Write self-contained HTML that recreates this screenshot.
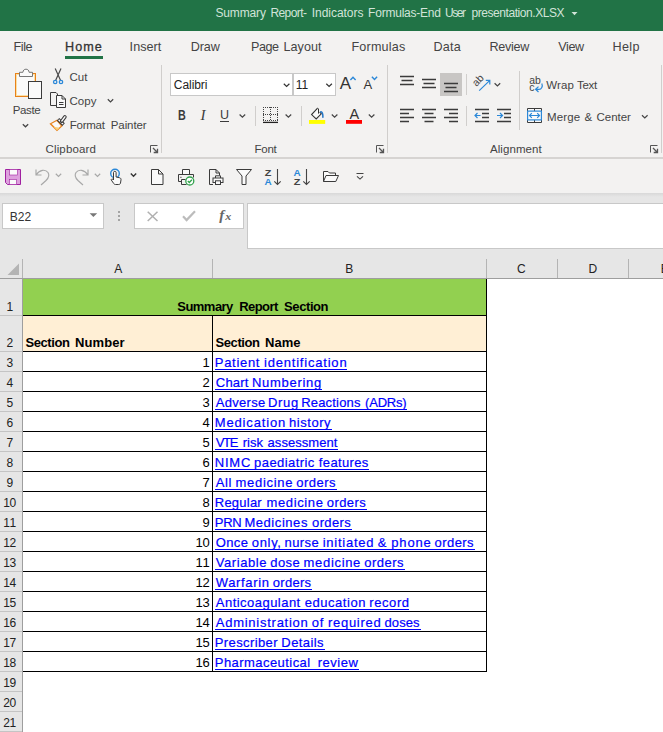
<!DOCTYPE html><html lang="en"><head><meta charset="utf-8"><title>Summary Report - Excel</title><style>

html,body{margin:0;padding:0}
body{width:663px;height:732px;position:relative;overflow:hidden;background:#fff;font-family:"Liberation Sans",sans-serif;color:#444}
div,span,svg{position:absolute;box-sizing:border-box}
.t{white-space:pre;line-height:1;}
.titlebar{left:0;top:0;width:663px;height:31px;background:#217346}
.ribbon{left:0;top:31px;width:663px;height:126px;background:#f3f2f1}
.ribbon-edge{left:0;top:157px;width:663px;height:2px;background:#d6d4d2}
.qat{left:0;top:159px;width:663px;height:34px;background:#f3f2f1}
.qat-shadow{left:0;top:193px;width:663px;height:4px;background:linear-gradient(#d8d8d8,#e6e6e6)}
.fbar{left:0;top:197px;width:663px;height:62px;background:#e6e6e6}
.box{background:#fff;border:1px solid #c8c8c8}
.colhdr{left:0;top:259px;width:663px;height:20px;background:#e6e6e6;border-bottom:1px solid #9e9e9e}
.rowhdr{left:0;top:279px;width:23px;height:453px;background:#e6e6e6;border-right:1px solid #9e9e9e}
.rsep{left:0;width:22px;height:1px;background:#c4c4c4}
.csep{top:259px;width:1px;height:19px;background:#b4b4b4}
.vsep{width:1px;background:#d0cecc}
.hl{background:#c8c6c4}
.home-ul{left:65px;top:56px;width:38px;height:3px;background:#217346}
.c1{left:23px;top:279px;width:464px;height:36px;background:#92d050}
.c2{left:23px;top:316px;width:464px;height:35px;background:#ffefd5}
.ln{background:#000}
svg{left:0;top:0;overflow:visible}
.lk{-webkit-text-stroke:0.2px #00f}
.ul{height:1px;background:#00f}

</style></head><body>

<div class="titlebar"></div><div class="ribbon"></div><div class="ribbon-edge"></div><div class="qat"></div><div class="qat-shadow"></div><div class="fbar"></div>
<div class="home-ul"></div>
<div class="vsep" style="left:161px;top:65px;height:88px"></div>
<div class="vsep" style="left:387px;top:65px;height:88px"></div>
<div class="vsep" style="left:661px;top:65px;height:88px"></div>
<div class="vsep" style="left:519px;top:71px;height:59px"></div>
<div class="vsep" style="left:255px;top:106px;height:20px"></div>
<div class="vsep" style="left:301px;top:106px;height:20px"></div>
<div class="vsep" style="left:466px;top:74px;height:21px"></div>
<div class="vsep" style="left:466px;top:106px;height:20px"></div>
<div class="box" style="left:170px;top:73px;width:123px;height:23px"></div>
<div class="box" style="left:293px;top:73px;width:43px;height:23px"></div>
<div class="hl" style="left:440px;top:73px;width:22px;height:23px"></div>
<div class="box" style="left:2px;top:203px;width:102px;height:26px"></div>
<div class="box" style="left:134px;top:203px;width:110px;height:26px"></div>
<div class="box" style="left:247px;top:203px;width:420px;height:46px"></div>
<div class="colhdr"></div><div class="rowhdr"></div>
<div class="csep" style="left:22px"></div>
<div class="csep" style="left:212px"></div>
<div class="csep" style="left:486px"></div>
<div class="csep" style="left:557px"></div>
<div class="csep" style="left:628px"></div>
<div class="rsep" style="top:315px"></div>
<div class="rsep" style="top:351px"></div>
<div class="rsep" style="top:371px"></div>
<div class="rsep" style="top:391px"></div>
<div class="rsep" style="top:411px"></div>
<div class="rsep" style="top:431px"></div>
<div class="rsep" style="top:451px"></div>
<div class="rsep" style="top:471px"></div>
<div class="rsep" style="top:491px"></div>
<div class="rsep" style="top:511px"></div>
<div class="rsep" style="top:531px"></div>
<div class="rsep" style="top:551px"></div>
<div class="rsep" style="top:571px"></div>
<div class="rsep" style="top:591px"></div>
<div class="rsep" style="top:611px"></div>
<div class="rsep" style="top:631px"></div>
<div class="rsep" style="top:651px"></div>
<div class="rsep" style="top:671px"></div>
<div class="rsep" style="top:691px"></div>
<div class="rsep" style="top:711px"></div>
<div class="rsep" style="top:731px"></div>
<div class="c1"></div><div class="c2"></div>
<div class="ln" style="left:23px;top:315px;width:464px;height:1px"></div>
<div class="ln" style="left:23px;top:351px;width:464px;height:1px"></div>
<div class="ln" style="left:23px;top:371px;width:464px;height:1px"></div>
<div class="ln" style="left:23px;top:391px;width:464px;height:1px"></div>
<div class="ln" style="left:23px;top:411px;width:464px;height:1px"></div>
<div class="ln" style="left:23px;top:431px;width:464px;height:1px"></div>
<div class="ln" style="left:23px;top:451px;width:464px;height:1px"></div>
<div class="ln" style="left:23px;top:471px;width:464px;height:1px"></div>
<div class="ln" style="left:23px;top:491px;width:464px;height:1px"></div>
<div class="ln" style="left:23px;top:511px;width:464px;height:1px"></div>
<div class="ln" style="left:23px;top:531px;width:464px;height:1px"></div>
<div class="ln" style="left:23px;top:551px;width:464px;height:1px"></div>
<div class="ln" style="left:23px;top:571px;width:464px;height:1px"></div>
<div class="ln" style="left:23px;top:591px;width:464px;height:1px"></div>
<div class="ln" style="left:23px;top:611px;width:464px;height:1px"></div>
<div class="ln" style="left:23px;top:631px;width:464px;height:1px"></div>
<div class="ln" style="left:23px;top:651px;width:464px;height:1px"></div>
<div class="ln" style="left:23px;top:671px;width:464px;height:1px"></div>
<div class="ln" style="left:212px;top:315px;width:1px;height:357px"></div>
<div class="ln" style="left:486px;top:279px;width:1px;height:393px"></div>
<div class="ul" style="left:215px;top:369px;width:132px"></div>
<div class="ul" style="left:215px;top:389px;width:107px"></div>
<div class="ul" style="left:215px;top:409px;width:192px"></div>
<div class="ul" style="left:215px;top:429px;width:117px"></div>
<div class="ul" style="left:215px;top:449px;width:123px"></div>
<div class="ul" style="left:215px;top:469px;width:154px"></div>
<div class="ul" style="left:215px;top:489px;width:122px"></div>
<div class="ul" style="left:215px;top:509px;width:152px"></div>
<div class="ul" style="left:215px;top:529px;width:137px"></div>
<div class="ul" style="left:215px;top:549px;width:260px"></div>
<div class="ul" style="left:215px;top:569px;width:190px"></div>
<div class="ul" style="left:215px;top:589px;width:97px"></div>
<div class="ul" style="left:215px;top:609px;width:194px"></div>
<div class="ul" style="left:215px;top:629px;width:206px"></div>
<div class="ul" style="left:215px;top:649px;width:110px"></div>
<div class="ul" style="left:215px;top:669px;width:144px"></div>
<svg width="663" height="732" viewBox="0 0 663 732" fill="none">
<!-- title dropdown -->
<path d="M571.5 12h6l-3 3.2z" fill="#d2e4d9"/>
<!-- paste -->
<g>
<rect x="15.5" y="73.5" width="20" height="23" fill="#fafafa" stroke="#e8821a"/>
<rect x="16.5" y="74.5" width="18" height="21" stroke="#fbe0a6"/>
<path d="M19.5 76.5v-4.2h3.4c.2-2 1.300-3.100 3.100-3.100s2.900 1.100 3.100 3.100h3.400v4.200z" fill="#fafafa" stroke="#777"/>
<rect x="28.500" y="81.500" width="13" height="17" fill="#fafafa" stroke="#3b3b3b"/>
<path d="M22.800 124.200l2.700 2.600 2.700-2.600" stroke="#444" stroke-width="1.200"/>
</g>
<!-- cut -->
<g stroke="#4a4a4a" stroke-width="1.200">
<path d="M55.200 68.600l5.300 11.600M61 68.600l-5.300 11.600"/>
<circle cx="55.200" cy="82" r="1.700" stroke="#2b88d8" stroke-width="1.300"/>
<circle cx="61" cy="82" r="1.700" stroke="#2b88d8" stroke-width="1.300"/>
</g>
<!-- copy -->
<g stroke="#3b3b3b">
<path d="M56.500 105.500h-6v-13h5.500l1.500 1.500v1.500"/>
<path d="M56.500 95.500h5.500l3.500 3.500v8.500h-9z" fill="#fafafa"/>
<path d="M62 95.500v3.500h3.500M59 102.500h4.500M59 104.500h4.500"/>
<path d="M107.800 99.300l2.700 2.600 2.700-2.600" stroke="#444" stroke-width="1.200"/>
</g>
<!-- format painter -->
<g>
<path d="M57 120.300l-6.500 3.500 6.500 6.500 4.800-4.300z" fill="#fafafa" stroke="#e8821a" stroke-width="1.300"/>
<path d="M53.500 126.800l3.500 3.500 2.800-2.500z" fill="#fbd27a"/>
<path d="M58 119.200l5.600 5.400" stroke="#3b3b3b" stroke-width="3.600"/>
<path d="M58.600 119.800l4.400 4.200" stroke="#fafafa" stroke-width="1.400"/>
<path d="M61.700 121.200l3.200-4.300" stroke="#3b3b3b" stroke-width="3.600" stroke-linecap="round"/>
<path d="M61.900 120.900l3-4" stroke="#fafafa" stroke-width="1.500" stroke-linecap="round"/>
</g>
<!-- dialog launchers -->
<g stroke="#555" id="dl">
<path d="M150.500 152.500v-7h7" />
<path d="M153 148l4.500 4.500m0-3.800v3.800h-3.800" stroke-width="1.300"/>
</g>
<g stroke="#555" transform="translate(226 0)">
<path d="M150.500 152.500v-7h7" />
<path d="M153 148l4.500 4.500m0-3.800v3.800h-3.800" stroke-width="1.300"/>
</g>
<g stroke="#555" transform="translate(500 0)">
<path d="M150.500 152.500v-7h7" />
<path d="M153 148l4.500 4.500m0-3.800v3.800h-3.800" stroke-width="1.300"/>
</g>
<!-- font box chevrons -->
<g stroke="#333" stroke-width="1.200">
<path d="M283.800 83.800l2.800 2.700 2.800-2.700"/>
<path d="M326.300 83.800l2.800 2.700 2.800-2.700"/>
</g>
<g stroke="#444" stroke-width="1.200">
<path d="M239.600 114.500l2.800 2.700 2.800-2.700"/>
<path d="M285.600 114.500l2.800 2.700 2.800-2.700"/>
<path d="M331.800 114.500l2.800 2.700 2.800-2.700"/>
<path d="M368.800 114.500l2.800 2.700 2.800-2.700"/>
<path d="M494.600 83.200l2.800 2.700 2.800-2.700"/>
<path d="M642 115.200l2.800 2.700 2.800-2.700"/>
</g>
<!-- U underline -->
<path d="M220 121.500h9" stroke="#3b3b3b"/>
<!-- grow/shrink carets -->
<path d="M350.400 80l2.600-2.800 2.600 2.800" stroke="#2b88d8" stroke-width="1.400"/>
<path d="M371.900 76.700l2.600 2.800 2.600-2.800" stroke="#2b88d8" stroke-width="1.400"/>
<!-- borders icon -->
<g stroke="#444">
<path d="M263 122.400h15" stroke="#222" stroke-width="1.300"/>
<path d="M263.500 107v14M277.500 107v14M263 107.500h15M270.500 107v14M263 114.500h15M263 120.500h15" stroke-dasharray="1 1"/>
</g>
<!-- fill bucket -->
<g>
<rect x="309" y="120" width="16.200" height="3.900" fill="#ffff00"/>
<path d="M316.900 108.900l-5.300 5.700 4.600 4.400 5.100-5.200-1.600-1.600" stroke="#333" fill="#fafafa" stroke-width="1.100"/>
<path d="M316.600 109.600v-.6a1 1 0 0 1 1.900 0v4.600" stroke="#333" stroke-width="1"/>
<path d="M320.600 111.900c1.500-.3 2.400 1.300 2.300 5.400" stroke="#1e74c6" stroke-width="1.500" stroke-linecap="round"/>
</g>
<!-- font color bar -->
<rect x="346" y="120" width="16" height="3.800" fill="#f00"/>
<!-- align icons -->
<g stroke="#3b3b3b" stroke-width="1.300">
<path d="M400 76.500h14M401.500 80.500h11M400 84.500h14"/>
<path d="M422 79.500h14M423.500 83.500h11M422 87.500h14"/>
<path d="M444 83.500h14M445.500 87.500h11M444 91.500h14"/>
<path d="M400 109.500h14M400 113.500h9M400 117.500h14M400 121.500h9"/>
<path d="M422 109.500h14M424.500 113.500h9M422 117.500h14M424.500 121.500h9"/>
<path d="M444 109.500h14M449 113.500h9M444 117.500h14M449 121.500h9"/>
</g>
<!-- orientation -->
<g>
<text x="0" y="0" font-size="10.500" fill="#444" font-family="Liberation Sans, sans-serif" transform="translate(476.400 87) rotate(-47)">ab</text>
<path d="M479.200 90.600l10.400-10M485.800 80.400h4v4" stroke="#2b88d8" stroke-width="1.200"/>
</g>
<!-- indent icons -->
<g stroke="#3b3b3b" stroke-width="1.300">
<path d="M475 109.500h14M482 113.500h7M482 117.500h7M475 121.500h14"/>
<path d="M497 109.500h14M504 113.500h7M504 117.500h7M497 121.500h14"/>
</g>
<g stroke="#2b88d8" stroke-width="1.200">
<path d="M480.500 115.500h-5M477.500 113l-2.500 2.500 2.500 2.500"/>
<path d="M497 115.500h5M500 113l2.500 2.500-2.500 2.500"/>
</g>
<!-- wrap text icon -->
<g>
<text x="529.300" y="83.500" font-size="10.500" fill="#444" font-family="Liberation Sans, sans-serif" textLength="11.600" lengthAdjust="spacingAndGlyphs">ab</text>
<text x="529.300" y="90.800" font-size="10.500" fill="#444" font-family="Liberation Sans, sans-serif">c</text>
<path d="M541.800 83.500c1.200 2.800-.2 5.800-2.800 5.800h-3.300M538.500 86.600l-2.900 2.700 2.900 2.700" stroke="#2b88d8" stroke-width="1.200"/>
</g>
<!-- merge icon -->
<g>
<path d="M527.500 111.200v-2.700h14v2.700M527.500 119.800v2.700h14v-2.700M534.500 108.500v2.700M534.500 119.800v2.700" stroke="#3b3b3b" fill="#fafafa"/>
<rect x="527.600" y="111.100" width="13.800" height="8.800" fill="#fafafa" stroke="#2b88d8" stroke-width="1.200"/>
<path d="M529.600 115.500h9.800M531.800 113.200l-2.300 2.300 2.300 2.300M537.200 113.200l2.300 2.300-2.300 2.300" stroke="#2b88d8" stroke-width="1.200"/>
</g>
<!-- QAT: save -->
<g>
<path d="M5.500 169.500h15v15h-13l-2-2z" fill="#dda0dd" stroke="#a020a0"/>
<rect x="9.500" y="169.500" width="8" height="5.500" fill="#fafafa" stroke="#a020a0" stroke-width=".6"/>
<rect x="9.500" y="179.500" width="7" height="5" fill="#fafafa" stroke="#a020a0" stroke-width=".6"/>
</g>
<!-- undo / redo -->
<g stroke="#a8a8a8" stroke-width="1.200">
<path d="M36 169.500v5.500h5.500M36.500 174.500c3-5 9-5.500 11.500-2 2 3 .5 5.500-2 8l-5 4.500"/>
<path d="M55.800 173.800l2.700 2.600 2.700-2.600"/>
<path d="M88 169.500v5.500h-5.500M87.500 174.500c-3-5-9-5.500-11.500-2-2 3-.5 5.500 2 8l5 4.500"/>
<path d="M94.800 173.800l2.700 2.600 2.700-2.600"/>
</g>
<!-- touch mode -->
<g>
<circle cx="115" cy="173.500" r="4.300" stroke="#2b88d8" stroke-width="1.400"/>
<path d="M113.500 180v-7.500c0-1.600 2.600-1.600 2.600 0v4.500l3.600 .8c1 .3 1.400 1 1.300 2l-.5 3.200c-.2 1-.8 1.500-1.800 1.500h-3.200c-.8 0-1.400-.4-1.800-1l-2.600-3.800c.6-1 1.600-.9 2.400 .3z" fill="#fafafa" stroke="#3b3b3b"/>
<path d="M130.800 173.600l2.700 2.600 2.700-2.600" stroke="#333" stroke-width="1.400"/>
</g>
<!-- new doc -->
<path d="M151.500 169.500h7l4.500 4.500v10.500h-11.500zM158.500 169.500v4.500h4.500" stroke="#3b3b3b" fill="#fafafa"/>
<!-- print preview -->
<g stroke="#3b3b3b">
<path d="M182.500 174.500v-5h7v5" fill="#fafafa"/>
<path d="M181.500 181.500h-3v-7h15v3" />
<path d="M180.300 177.300h1.200" />
<path d="M181.500 179.500h4M181.500 179.500v5h5"/>
<circle cx="189.800" cy="181" r="4" fill="#fff" stroke="#31a24c" stroke-width="1.300"/>
<path d="M187.800 181l1.500 1.500 2.600-2.800" stroke="#31a24c" stroke-width="1.300"/>
</g>
<!-- quick print -->
<g stroke="#3b3b3b">
<path d="M213 184.500h-3.500v-15h6.500l3.500 3.500v2.500M216 169.500v3.500h3.500"/>
<path d="M215.500 178v-2.200h5v2.200"/>
<rect x="213" y="178" width="10" height="4.500" fill="#fafafa"/>
<rect x="215.500" y="180.800" width="5" height="3.700" fill="#fafafa"/>
</g>
<!-- filter -->
<path d="M236.500 169.500h15l-5.500 6.500v8.500h-4v-8.500z" stroke="#3b3b3b" fill="#fafafa"/>
<!-- sort ZA / AZ -->
<g font-family="Liberation Sans, sans-serif" font-size="8.800" font-weight="700">
<text x="264.800" y="175.800" fill="#444" textLength="6.600" lengthAdjust="spacingAndGlyphs">Z</text>
<text x="264.500" y="184.800" fill="#2b88d8" textLength="7.200" lengthAdjust="spacingAndGlyphs">A</text>
<text x="293.500" y="175.800" fill="#2b88d8" textLength="7.200" lengthAdjust="spacingAndGlyphs">A</text>
<text x="293.800" y="184.800" fill="#444" textLength="6.600" lengthAdjust="spacingAndGlyphs">Z</text>
</g>
<g stroke="#444" stroke-width="1.100">
<path d="M277.500 169v15.500M274.300 181.300l3.200 3.200 3.200-3.200"/>
<path d="M306.500 169v15.500M303.300 181.300l3.200 3.200 3.200-3.200"/>
</g>
<!-- open folder -->
<path d="M323.500 181.500v-10h4.500l1.500 1.500h6v2.500M323.500 181.500l2.500-6h12.500l-2.700 6z" stroke="#3b3b3b" fill="#fafafa"/>
<!-- qat customize -->
<path d="M356.500 173.500h7M357 176.300l3 2.800 3-2.800" stroke="#444" stroke-width="1.100"/>
<!-- name box arrow -->
<path d="M89.600 213.200h7.600l-3.800 3.900z" fill="#777"/>
<!-- dots -->
<g fill="#a4a4a4"><rect x="118" y="211" width="2" height="2"/><rect x="118" y="215" width="2" height="2"/><rect x="118" y="219" width="2" height="2"/></g>
<!-- cancel / enter / fx -->
<g stroke="#b0b0b0" stroke-width="1.500">
<path d="M147.700 211.700l9.800 9.300M157.500 211.700l-9.800 9.300"/>
<path d="M183 216.300l3.600 3.800 8.400-8.900" stroke="#bcbcbc" stroke-width="2.200"/>
</g>
<text x="219.300" y="220" font-size="15" font-style="italic" font-weight="700" fill="#666" font-family="Liberation Serif, serif">f</text>
<text x="225.200" y="220.200" font-size="9.500" font-style="italic" font-weight="700" fill="#666" font-family="Liberation Serif, serif" textLength="6" lengthAdjust="spacingAndGlyphs">x</text>
<!-- select all triangle -->
<path d="M19 263.500v11.500h-11.500z" fill="#b4b4b4"/>
</svg>

<span class="t" style="left:215.50px;top:7.20px;font-size:12px;color:#d2e4d9;letter-spacing:-0.157px;">Summary</span>
<span class="t" style="left:270.40px;top:7.20px;font-size:12px;color:#d2e4d9;letter-spacing:-0.570px;">Report-</span>
<span class="t" style="left:311.80px;top:7.20px;font-size:12px;color:#d2e4d9;letter-spacing:-0.047px;">Indicators</span>
<span class="t" style="left:368.10px;top:7.20px;font-size:12px;color:#d2e4d9;letter-spacing:-0.226px;">Formulas-End</span>
<span class="t" style="left:445.10px;top:7.20px;font-size:12px;color:#d2e4d9;letter-spacing:-1.513px;">User</span>
<span class="t" style="left:471.50px;top:7.20px;font-size:12px;color:#d2e4d9;letter-spacing:-0.435px;">presentation.XLSX</span>
<span class="t" style="left:13.60px;top:41.30px;font-size:12.6px;letter-spacing:-0.463px;">File</span>
<span class="t" style="left:65.00px;top:41.30px;font-size:12.6px;color:#333;letter-spacing:1.037px;-webkit-text-stroke:0.3px #333;">Home</span>
<span class="t" style="left:129.60px;top:41.30px;font-size:12.6px;letter-spacing:0.040px;">Insert</span>
<span class="t" style="left:190.80px;top:41.30px;font-size:12.6px;letter-spacing:-0.131px;">Draw</span>
<span class="t" style="left:251.00px;top:41.30px;font-size:12.6px;letter-spacing:-0.503px;">Page</span>
<span class="t" style="left:283.50px;top:41.30px;font-size:12.6px;letter-spacing:0.037px;">Layout</span>
<span class="t" style="left:351.40px;top:41.30px;font-size:12.6px;letter-spacing:0.202px;">Formulas</span>
<span class="t" style="left:433.60px;top:41.30px;font-size:12.6px;letter-spacing:0.167px;">Data</span>
<span class="t" style="left:489.40px;top:41.30px;font-size:12.6px;letter-spacing:-0.280px;">Review</span>
<span class="t" style="left:558.20px;top:41.30px;font-size:12.6px;letter-spacing:-0.358px;">View</span>
<span class="t" style="left:612.40px;top:41.30px;font-size:12.6px;letter-spacing:0.401px;">Help</span>
<span class="t" style="left:12.70px;top:104.70px;font-size:11.5px;letter-spacing:-0.353px;">Paste</span>
<span class="t" style="left:69.50px;top:72.20px;font-size:11.5px;">Cut</span>
<span class="t" style="left:69.50px;top:96.20px;font-size:11.5px;letter-spacing:0.068px;">Copy</span>
<span class="t" style="left:69.70px;top:119.70px;font-size:11.5px;letter-spacing:-0.225px;">Format</span>
<span class="t" style="left:110.80px;top:119.70px;font-size:11.5px;letter-spacing:-0.101px;">Painter</span>
<span class="t" style="left:45.50px;top:143.50px;font-size:11.5px;letter-spacing:0.147px;">Clipboard</span>
<span class="t" style="left:173.80px;top:79.40px;font-size:12px;color:#222;letter-spacing:-0.057px;">Calibri</span>
<span class="t" style="left:295.80px;top:79.40px;font-size:12px;color:#222;">11</span>
<span class="t" style="left:177.50px;top:107.50px;font-size:14px;transform:scaleX(0.770);transform-origin:0 0;font-weight:700;color:#3b3b3b;">B</span>
<span class="t" style="left:200.60px;top:107.50px;font-size:15px;color:#3b3b3b;font-family:'Liberation Serif',serif;font-style:italic;">I</span>
<span class="t" style="left:219.95px;top:109.00px;font-size:12.5px;color:#3b3b3b;">U</span>
<span class="t" style="left:254.50px;top:143.50px;font-size:11.5px;letter-spacing:-0.272px;">Font</span>
<span class="t" style="left:339.65px;top:74.80px;font-size:17px;color:#333;">A</span>
<span class="t" style="left:363.40px;top:77.80px;font-size:13px;color:#333;">A</span>
<span class="t" style="left:349.60px;top:106.80px;font-size:14.5px;color:#333;">A</span>
<span class="t" style="left:546.30px;top:80.20px;font-size:11.5px;letter-spacing:0.109px;">Wrap</span>
<span class="t" style="left:577.10px;top:80.20px;font-size:11.5px;letter-spacing:-0.365px;">Text</span>
<span class="t" style="left:546.90px;top:112.00px;font-size:11.5px;letter-spacing:0.175px;">Merge</span>
<span class="t" style="left:584.45px;top:112.00px;font-size:11.5px;">&amp;</span>
<span class="t" style="left:596.50px;top:112.00px;font-size:11.5px;letter-spacing:-0.037px;">Center</span>
<span class="t" style="left:490.00px;top:143.50px;font-size:11.5px;letter-spacing:0.070px;">Alignment</span>
<span class="t" style="left:9.80px;top:210.60px;font-size:12px;color:#333;letter-spacing:-0.039px;">B22</span>
<span class="t" style="left:114.15px;top:263.00px;font-size:12px;color:#222;">A</span>
<span class="t" style="left:345.25px;top:263.00px;font-size:12px;color:#222;">B</span>
<span class="t" style="left:517.00px;top:263.00px;font-size:12px;color:#222;">C</span>
<span class="t" style="left:588.50px;top:263.00px;font-size:12px;color:#222;">D</span>
<span class="t" style="left:660.65px;top:263.00px;font-size:12px;color:#222;">E</span>
<span class="t" style="left:6.40px;top:301.00px;font-size:12px;color:#222;">1</span>
<span class="t" style="left:6.40px;top:337.00px;font-size:12px;color:#222;">2</span>
<span class="t" style="left:6.40px;top:357.00px;font-size:12px;color:#222;">3</span>
<span class="t" style="left:6.40px;top:377.00px;font-size:12px;color:#222;">4</span>
<span class="t" style="left:6.40px;top:397.00px;font-size:12px;color:#222;">5</span>
<span class="t" style="left:6.40px;top:417.00px;font-size:12px;color:#222;">6</span>
<span class="t" style="left:6.40px;top:437.00px;font-size:12px;color:#222;">7</span>
<span class="t" style="left:6.40px;top:457.00px;font-size:12px;color:#222;">8</span>
<span class="t" style="left:6.40px;top:477.00px;font-size:12px;color:#222;">9</span>
<span class="t" style="left:3.35px;top:497.00px;font-size:12px;color:#222;letter-spacing:-0.574px;">10</span>
<span class="t" style="left:3.35px;top:517.00px;font-size:12px;color:#222;letter-spacing:0.317px;">11</span>
<span class="t" style="left:3.35px;top:537.00px;font-size:12px;color:#222;letter-spacing:-0.574px;">12</span>
<span class="t" style="left:3.35px;top:557.00px;font-size:12px;color:#222;letter-spacing:-0.574px;">13</span>
<span class="t" style="left:3.35px;top:577.00px;font-size:12px;color:#222;letter-spacing:-0.574px;">14</span>
<span class="t" style="left:3.35px;top:597.00px;font-size:12px;color:#222;letter-spacing:-0.574px;">15</span>
<span class="t" style="left:3.35px;top:617.00px;font-size:12px;color:#222;letter-spacing:-0.574px;">16</span>
<span class="t" style="left:3.35px;top:637.00px;font-size:12px;color:#222;letter-spacing:-0.574px;">17</span>
<span class="t" style="left:3.35px;top:657.00px;font-size:12px;color:#222;letter-spacing:-0.574px;">18</span>
<span class="t" style="left:3.35px;top:677.00px;font-size:12px;color:#222;letter-spacing:-0.574px;">19</span>
<span class="t" style="left:3.35px;top:697.00px;font-size:12px;color:#222;letter-spacing:-0.574px;">20</span>
<span class="t" style="left:3.35px;top:717.00px;font-size:12px;color:#222;letter-spacing:-0.574px;">21</span>
<span class="t" style="left:177.30px;top:300.00px;font-size:13px;font-weight:700;color:#000;letter-spacing:-0.537px;">Summary</span>
<span class="t" style="left:239.20px;top:300.00px;font-size:13px;font-weight:700;color:#000;letter-spacing:-0.552px;">Report</span>
<span class="t" style="left:284.10px;top:300.00px;font-size:13px;font-weight:700;color:#000;letter-spacing:-0.419px;">Section</span>
<span class="t" style="left:25.50px;top:336.00px;font-size:13px;font-weight:700;color:#000;letter-spacing:-0.419px;">Section</span>
<span class="t" style="left:75.10px;top:336.00px;font-size:13px;font-weight:700;color:#000;letter-spacing:0.088px;">Number</span>
<span class="t" style="left:215.60px;top:336.00px;font-size:13px;font-weight:700;color:#000;letter-spacing:-0.435px;">Section</span>
<span class="t" style="left:265.10px;top:336.00px;font-size:13px;font-weight:700;color:#000;letter-spacing:0.008px;">Name</span>
<span class="t" style="left:202.45px;top:356.00px;font-size:13px;color:#000;">1</span>
<span class="t lk" style="left:214.80px;top:356.00px;font-size:13px;color:#00f;letter-spacing:0.696px;">Patient</span>
<span class="t lk" style="left:264.03px;top:356.00px;font-size:13px;color:#00f;letter-spacing:0.794px;">identification</span>
<span class="t" style="left:202.45px;top:376.00px;font-size:13px;color:#000;">2</span>
<span class="t lk" style="left:215.80px;top:376.00px;font-size:13px;color:#00f;letter-spacing:0.205px;">Chart</span>
<span class="t lk" style="left:251.89px;top:376.00px;font-size:13px;color:#00f;letter-spacing:0.732px;">Numbering</span>
<span class="t" style="left:202.45px;top:396.00px;font-size:13px;color:#000;">3</span>
<span class="t lk" style="left:215.80px;top:396.00px;font-size:13px;color:#00f;letter-spacing:0.276px;">Adverse</span>
<span class="t lk" style="left:268.04px;top:396.00px;font-size:13px;color:#00f;letter-spacing:0.687px;">Drug</span>
<span class="t lk" style="left:301.18px;top:396.00px;font-size:13px;color:#00f;letter-spacing:0.187px;">Reactions</span>
<span class="t lk" style="left:365.11px;top:396.00px;font-size:13px;color:#00f;letter-spacing:-0.236px;">(ADRs)</span>
<span class="t" style="left:202.45px;top:416.00px;font-size:13px;color:#000;">4</span>
<span class="t lk" style="left:214.80px;top:416.00px;font-size:13px;color:#00f;letter-spacing:0.841px;">Medication</span>
<span class="t lk" style="left:289.12px;top:416.00px;font-size:13px;color:#00f;letter-spacing:0.514px;">history</span>
<span class="t" style="left:202.45px;top:436.00px;font-size:13px;color:#000;">5</span>
<span class="t lk" style="left:215.80px;top:436.00px;font-size:13px;color:#00f;letter-spacing:-1.372px;">VTE</span>
<span class="t lk" style="left:242.77px;top:436.00px;font-size:13px;color:#00f;">risk</span>
<span class="t lk" style="left:267.60px;top:436.00px;font-size:13px;color:#00f;letter-spacing:0.050px;">assessment</span>
<span class="t" style="left:202.45px;top:456.00px;font-size:13px;color:#000;">6</span>
<span class="t lk" style="left:214.80px;top:456.00px;font-size:13px;color:#00f;letter-spacing:0.778px;">NIMC</span>
<span class="t lk" style="left:254.08px;top:456.00px;font-size:13px;color:#00f;letter-spacing:0.420px;">paediatric</span>
<span class="t lk" style="left:318.84px;top:456.00px;font-size:13px;color:#00f;letter-spacing:0.356px;">features</span>
<span class="t" style="left:202.45px;top:476.00px;font-size:13px;color:#000;">7</span>
<span class="t lk" style="left:215.80px;top:476.00px;font-size:13px;color:#00f;letter-spacing:0.522px;">All</span>
<span class="t lk" style="left:235.58px;top:476.00px;font-size:13px;color:#00f;letter-spacing:0.686px;">medicine</span>
<span class="t lk" style="left:296.35px;top:476.00px;font-size:13px;color:#00f;letter-spacing:0.480px;">orders</span>
<span class="t" style="left:202.45px;top:496.00px;font-size:13px;color:#000;">8</span>
<span class="t lk" style="left:214.80px;top:496.00px;font-size:13px;color:#00f;letter-spacing:0.227px;">Regular</span>
<span class="t lk" style="left:266.51px;top:496.00px;font-size:13px;color:#00f;letter-spacing:0.619px;">medicine</span>
<span class="t lk" style="left:326.78px;top:496.00px;font-size:13px;color:#00f;letter-spacing:0.414px;">orders</span>
<span class="t" style="left:202.45px;top:516.00px;font-size:13px;color:#000;">9</span>
<span class="t lk" style="left:214.80px;top:516.00px;font-size:13px;color:#00f;letter-spacing:-0.291px;">PRN</span>
<span class="t lk" style="left:244.40px;top:516.00px;font-size:13px;color:#00f;letter-spacing:0.562px;">Medicines</span>
<span class="t lk" style="left:312.05px;top:516.00px;font-size:13px;color:#00f;letter-spacing:0.361px;">orders</span>
<span class="t" style="left:195.60px;top:536.00px;font-size:13px;color:#000;letter-spacing:-0.430px;">10</span>
<span class="t lk" style="left:215.80px;top:536.00px;font-size:13px;color:#00f;letter-spacing:0.343px;">Once</span>
<span class="t lk" style="left:251.83px;top:536.00px;font-size:13px;color:#00f;letter-spacing:0.665px;">only,</span>
<span class="t lk" style="left:284.53px;top:536.00px;font-size:13px;color:#00f;letter-spacing:0.431px;">nurse</span>
<span class="t lk" style="left:322.70px;top:536.00px;font-size:13px;color:#00f;letter-spacing:0.757px;">initiated</span>
<span class="t lk" style="left:377.85px;top:536.00px;font-size:13px;color:#00f;">&amp;</span>
<span class="t lk" style="left:391.37px;top:536.00px;font-size:13px;color:#00f;letter-spacing:0.785px;">phone</span>
<span class="t lk" style="left:434.59px;top:536.00px;font-size:13px;color:#00f;letter-spacing:0.433px;">orders</span>
<span class="t" style="left:195.60px;top:556.00px;font-size:13px;color:#000;letter-spacing:0.535px;">11</span>
<span class="t lk" style="left:215.80px;top:556.00px;font-size:13px;color:#00f;letter-spacing:0.548px;">Variable</span>
<span class="t lk" style="left:270.31px;top:556.00px;font-size:13px;color:#00f;letter-spacing:0.385px;">dose</span>
<span class="t lk" style="left:303.59px;top:556.00px;font-size:13px;color:#00f;letter-spacing:0.677px;">medicine</span>
<span class="t lk" style="left:364.30px;top:556.00px;font-size:13px;color:#00f;letter-spacing:0.471px;">orders</span>
<span class="t" style="left:195.60px;top:576.00px;font-size:13px;color:#000;letter-spacing:-0.430px;">12</span>
<span class="t lk" style="left:215.80px;top:576.00px;font-size:13px;color:#00f;letter-spacing:0.646px;">Warfarin</span>
<span class="t lk" style="left:272.82px;top:576.00px;font-size:13px;color:#00f;letter-spacing:0.286px;">orders</span>
<span class="t" style="left:195.60px;top:596.00px;font-size:13px;color:#000;letter-spacing:-0.430px;">13</span>
<span class="t lk" style="left:215.80px;top:596.00px;font-size:13px;color:#00f;letter-spacing:0.469px;">Anticoagulant</span>
<span class="t lk" style="left:304.71px;top:596.00px;font-size:13px;color:#00f;letter-spacing:0.538px;">education</span>
<span class="t lk" style="left:369.29px;top:596.00px;font-size:13px;color:#00f;letter-spacing:0.579px;">record</span>
<span class="t" style="left:195.60px;top:616.00px;font-size:13px;color:#000;letter-spacing:-0.430px;">14</span>
<span class="t lk" style="left:215.80px;top:616.00px;font-size:13px;color:#00f;letter-spacing:0.739px;">Administration</span>
<span class="t lk" style="left:311.71px;top:616.00px;font-size:13px;color:#00f;letter-spacing:0.828px;">of</span>
<span class="t lk" style="left:327.94px;top:616.00px;font-size:13px;color:#00f;letter-spacing:0.720px;">required</span>
<span class="t lk" style="left:384.60px;top:616.00px;font-size:13px;color:#00f;letter-spacing:0.051px;">doses</span>
<span class="t" style="left:195.60px;top:636.00px;font-size:13px;color:#000;letter-spacing:-0.430px;">15</span>
<span class="t lk" style="left:214.80px;top:636.00px;font-size:13px;color:#00f;letter-spacing:0.389px;">Prescriber</span>
<span class="t lk" style="left:281.35px;top:636.00px;font-size:13px;color:#00f;letter-spacing:0.418px;">Details</span>
<span class="t" style="left:195.60px;top:656.00px;font-size:13px;color:#000;letter-spacing:-0.430px;">16</span>
<span class="t lk" style="left:214.80px;top:656.00px;font-size:13px;color:#00f;letter-spacing:0.442px;">Pharmaceutical</span>
<span class="t lk" style="left:317.79px;top:656.00px;font-size:13px;color:#00f;letter-spacing:0.506px;">review</span>
</body></html>
